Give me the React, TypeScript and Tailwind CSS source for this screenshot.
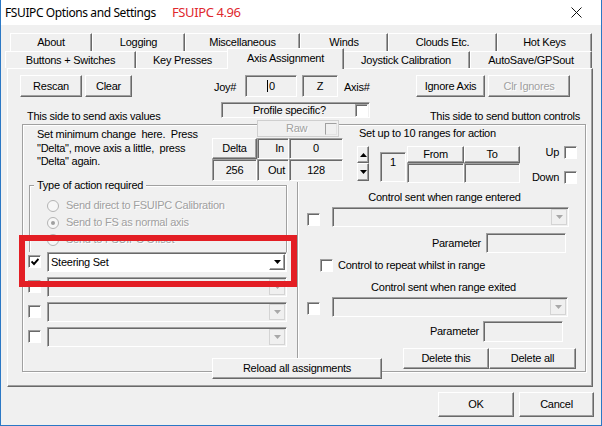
import React from "react";

const raised =
  "border border-t-white border-l-white border-r-[#696969] border-b-[#696969] shadow-[inset_-1px_-1px_0_#a0a0a0]";
const sunken =
  "border border-t-[#a0a0a0] border-l-[#a0a0a0] border-r-white border-b-white shadow-[inset_1px_1px_0_#696969]";
const etched = "border border-[#a0a0a0] shadow-[inset_1px_1px_0_#fff,1px_1px_0_#fff]";
const greyed = "text-[#a0a0a0] [text-shadow:1px_1px_0_#fff]";

function Button({
  label,
  className = "",
  disabled,
}: {
  label: string;
  className?: string;
  disabled?: boolean;
}) {
  return (
    <div
      className={`${raised} flex shrink-0 items-center justify-center ${disabled ? greyed : ""} ${className}`}
    >
      {label}
    </div>
  );
}

function Check({ checked, className = "" }: { checked?: boolean; className?: string }) {
  return (
    <div
      className={`${sunken} flex h-[13px] w-[13px] shrink-0 items-center justify-center bg-white ${className}`}
    >
      {checked && (
        <svg width="8" height="8" viewBox="0 0 8 8">
          <path d="M0.5 3.5 L3 6 L7.5 1" stroke="#000" strokeWidth="1.9" fill="none" />
        </svg>
      )}
    </div>
  );
}

function Arrow({ up, color = "#000" }: { up?: boolean; color?: string }) {
  return (
    <svg width="7" height="4" viewBox="0 0 7 4">
      <path d={up ? "M0 4h7L3.5 0z" : "M0 0h7L3.5 4z"} fill={color} />
    </svg>
  );
}

function Combo({ value, className = "" }: { value?: string; className?: string }) {
  const on = !!value;
  return (
    <div className={`${sunken} flex h-[20px] items-center ${on ? "bg-white" : ""} ${className}`}>
      <span className="flex-1 truncate pl-[3px]">{value}</span>
      <div
        className={`${on ? raised : "border border-[#d4d4d4]"} mr-[1px] flex h-[16px] w-[16px] items-center justify-center`}
      >
        <Arrow color={on ? "#000" : "#a8a8a8"} />
      </div>
    </div>
  );
}

function Radio({ checked, label }: { checked?: boolean; label: string }) {
  return (
    <div className="flex h-[17px] items-center">
      <div className="ml-[17px] flex h-[12px] w-[12px] items-center justify-center rounded-full border border-[#b4b4b4] bg-[#f7f7f7]">
        {checked && <div className="h-[4px] w-[4px] rounded-full bg-[#a0a0a0]" />}
      </div>
      <span className={`ml-[7px] ${greyed}`}>{label}</span>
    </div>
  );
}

function Tab({ label, w, selected }: { label: string; w: string; selected?: boolean }) {
  return (
    <div
      className={`${w} flex shrink-0 items-center justify-center border-l border-t border-white border-r border-r-[#696969] shadow-[inset_-1px_0_0_#a0a0a0] ${
        selected ? "relative z-10 -mx-[2px] -mt-[3px] -mb-[1px] bg-[#f0f0f0] pb-[2px]" : ""
      }`}
    >
      {label}
    </div>
  );
}

export default function App() {
  return (
    <div className="flex h-[426px] w-[602px] flex-col overflow-hidden border-x border-b border-[#2b78c5] bg-[#f0f0f0] font-['Liberation_Sans',Arial,sans-serif] text-[11px] leading-[11px] tracking-[-0.25px] text-black">
      {/* title bar */}
      <div className="flex h-[25px] shrink-0 items-center bg-white font-['Noto_Sans',sans-serif] text-[12px] tracking-[-0.4px]">
        <span className="ml-[4px] w-[167px]">FSUIPC Options and Settings</span>
        <span className="text-[13px] text-[#e0282e]">FSUIPC 4.96</span>
        <svg className="ml-auto mr-[19px]" width="11" height="11" viewBox="0 0 11 11">
          <path d="M0.5 0.5 L10.5 10.5 M10.5 0.5 L0.5 10.5" stroke="#111" strokeWidth="1" />
        </svg>
      </div>

      {/* tabs */}
      <div className="mt-[8px] flex h-[18px] ml-[9px]">
        <Tab label="About" w="w-[82px]" />
        <Tab label="Logging" w="w-[93px]" />
        <Tab label="Miscellaneous" w="w-[115px]" />
        <Tab label="Winds" w="w-[88px]" />
        <Tab label="Clouds Etc." w="w-[109px]" />
        <Tab label="Hot Keys" w="w-[95px]" />
      </div>
      <div className="flex h-[17px] ml-[4px]">
        <Tab label="Buttons + Switches" w="w-[131px]" />
        <Tab label="Key Presses" w="w-[93px]" />
        <Tab label="Axis Assignment" w="w-[117px]" selected />
        <Tab label="Joystick Calibration" w="w-[128px]" />
        <Tab label="AutoSave/GPSout" w="w-[122px]" />
      </div>

      {/* tab page */}
      <div className={`${raised} ml-[6px] flex h-[319px] w-[586px] shrink-0 flex-col`}>
        {/* top buttons */}
        <div className="mt-[6px] flex items-start">
          <Button label="Rescan" className="ml-[12px] h-[22px] w-[62px]" />
          <Button label="Clear" className="ml-[3px] h-[22px] w-[47px]" />
          <span className="ml-[82px] w-[31px] pt-[7px]">Joy#</span>
          <div className={`${sunken} flex h-[22px] w-[52px] items-center justify-center`}>
            <span className="mr-[1px] h-[12px] w-px bg-black" />0
          </div>
          <div className={`${sunken} ml-[5px] flex h-[22px] w-[36px] items-center justify-center`}>Z</div>
          <span className="ml-[6px] w-[72px] pt-[7px]">Axis#</span>
          <Button label="Ignore Axis" className="h-[22px] w-[69px]" />
          <Button label="Clr Ignores" className="ml-[3px] h-[22px] w-[82px]" disabled />
        </div>

        {/* side captions */}
        <div className="mt-[5px] flex h-[16px] items-start">
          <span className="ml-[19px] w-[194px] pt-[9px]">This side to send axis values</span>
          <div className={`${sunken} flex h-[16px] w-[149px] items-center`}>
            <span className="flex-1 pl-[31px]">Profile specific?</span>
            <Check className="mr-[1px]" />
          </div>
          <span className="ml-auto mr-[12px] pt-[9px]">This side to send button controls</span>
        </div>

        {/* main frame */}
        <div className={`${etched} relative ml-[14px] mt-[6px] flex h-[248px] w-[564px] flex-col`}>
          {/* Raw sits over the frame line */}
          <div className="absolute left-[234px] top-[-5px] flex h-[17px] w-[82px] items-center border border-[#cfcfcf] bg-[#f0f0f0]">
            <span className={`flex-1 pl-[28px] ${greyed}`}>Raw</span>
            <div className="mr-[1px] h-[12px] w-[12px] border border-[#a0a0a0] border-r-[#e3e3e3] border-b-[#e3e3e3]" />
          </div>

          <div className="flex h-[57px] shrink-0">
            <div className="ml-[14px] mt-[3px] w-[175px] whitespace-pre leading-[13.5px]">
              {'Set minimum change  here.  Press\n"Delta", move axis a little,  press\n"Delta" again.'}
            </div>
            <div className="mt-[13px] grid h-[43px] grid-cols-[45px_32px_54px] grid-rows-[21px_22px]">
              <Button label="Delta" className="h-[21px]" />
              <div className={`${sunken} flex items-center justify-end pr-[4px]`}>In</div>
              <div className={`${sunken} flex items-center justify-center`}>0</div>
              <div className={`${sunken} flex items-center justify-center`}>256</div>
              <div className={`${sunken} flex items-center justify-end pr-[3px]`}>Out</div>
              <div className={`${sunken} flex items-center justify-center`}>128</div>
            </div>

            <div className="ml-[14px] flex flex-col">
              <span className="mt-[3px] pl-[2px]">Set up to 10 ranges for action</span>
              <div className="mt-[7px] flex items-start">
                <div className="flex w-[12px] flex-col">
                  <div className={`${raised} flex h-[17px] items-center justify-center`}>
                    <Arrow up />
                  </div>
                  <div className={`${raised} flex h-[18px] items-center justify-center`}>
                    <Arrow />
                  </div>
                </div>
                <div className={`${sunken} ml-[11px] mt-[6px] flex h-[30px] w-[26px] justify-center pt-[4px]`}>1</div>
                <div className="ml-[1px] grid grid-cols-[57px_56px] grid-rows-[17px_20px]">
                  <Button label="From" />
                  <Button label="To" />
                  <div className={sunken} />
                  <div className={sunken} />
                </div>
                <div className="ml-[10px] flex w-[47px] flex-col items-end">
                  <div className="flex items-center">
                    <span className="mr-[5px]">Up</span>
                    <Check />
                  </div>
                  <div className="mt-[12px] flex items-center">
                    <span className="mr-[5px]">Down</span>
                    <Check />
                  </div>
                </div>
              </div>
            </div>
          </div>

          <div className="flex flex-1">
            {/* axis side */}
            <div className="w-[274px] shrink-0">
              <div className="relative ml-[6px] mt-[3px] h-[67px] w-[258px] border border-b-0 border-[#a0a0a0] shadow-[inset_1px_1px_0_#fff,1px_0_0_#fff]">
                <span className="absolute left-[4px] top-[-6px] bg-[#f0f0f0] px-[3px]">Type of action required</span>
                <div className="mt-[11px]">
                  <Radio label="Send direct to FSUIPC Calibration" />
                  <Radio label="Send to FS as normal axis" checked />
                  <Radio label="Send to FSUIPC Offset" />
                </div>
              </div>
              <div className="flex flex-col gap-[5px]">
                {["Steering Set", "", "", ""].map((v, i) => (
                  <div key={i} className="flex items-start">
                    <Check checked={!!v} className="ml-[5px] mt-[3px]" />
                    <Combo value={v} className="ml-[6px] w-[240px]" />
                  </div>
                ))}
              </div>
            </div>

            {/* button side */}
            <div className="flex-1 border-l border-[#a0a0a0] shadow-[inset_1px_0_0_#fff]">
              <div className="mt-[10px] pl-[6px] text-center">Control sent when range entered</div>
              <div className="mt-[4px] flex items-start">
                <Check className="ml-[9px] mt-[6px]" />
                <Combo className="ml-[12px] w-[237px]" />
              </div>
              <div className="mt-[6px] flex items-center">
                <span className="w-[183px] text-right">Parameter</span>
                <div className={`${sunken} ml-[5px] h-[20px] w-[80px]`} />
              </div>
              <div className="mt-[6px] flex items-center">
                <Check className="ml-[22px]" />
                <span className="ml-[5px]">Control to repeat whilst in range</span>
              </div>
              <div className="mt-[10px] pl-[4px] text-center">Control sent when range exited</div>
              <div className="mt-[4px] flex items-start">
                <Check className="ml-[9px] mt-[5px]" />
                <Combo className="ml-[12px] w-[236px]" />
              </div>
              <div className="mt-[4px] flex items-center">
                <span className="w-[181px] text-right">Parameter</span>
                <div className={`${sunken} ml-[4px] h-[21px] w-[80px]`} />
              </div>
              <div className="mt-[6px] flex">
                <Button label="Delete this" className="ml-[105px] h-[21px] w-[86px]" />
                <Button label="Delete all" className="h-[21px] w-[87px]" />
              </div>
            </div>
          </div>
        </div>

        <Button label="Reload all assignments" className="relative ml-[204px] -mt-[14px] h-[21px] w-[170px] bg-[#f0f0f0]" />
      </div>

      {/* dialog buttons */}
      <div className="mt-[5px] flex justify-end pr-[7px]">
        <Button label="OK" className="h-[25px] w-[76px]" />
        <Button label="Cancel" className="ml-[5px] h-[25px] w-[75px]" />
      </div>

      {/* annotation */}
      <div className="pointer-events-none absolute left-[19px] top-[235px] h-[52px] w-[278px] border-[6px] border-[#e31e24]" />
    </div>
  );
}
